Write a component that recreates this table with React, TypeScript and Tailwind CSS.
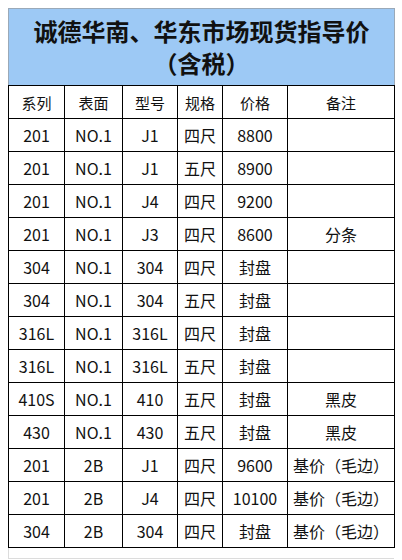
import React from "react"

const cols = [56, 58, 55, 45, 65, 107]

const heads = ["系列", "表面", "型号", "规格", "价格", "备注"]

const rows: string[][] = [
  ["201", "NO.1", "J1", "四尺", "8800", ""],
  ["201", "NO.1", "J1", "五尺", "8900", ""],
  ["201", "NO.1", "J4", "四尺", "9200", ""],
  ["201", "NO.1", "J3", "四尺", "8600", "分条"],
  ["304", "NO.1", "304", "四尺", "封盘", ""],
  ["304", "NO.1", "304", "五尺", "封盘", ""],
  ["316L", "NO.1", "316L", "四尺", "封盘", ""],
  ["316L", "NO.1", "316L", "五尺", "封盘", ""],
  ["410S", "NO.1", "410", "五尺", "封盘", "黑皮"],
  ["430", "NO.1", "430", "五尺", "封盘", "黑皮"],
  ["201", "2B", "J1", "四尺", "9600", "基价（毛边）"],
  ["201", "2B", "J4", "四尺", "10100", "基价（毛边）"],
  ["304", "2B", "304", "四尺", "封盘", "基价（毛边）"],
]

const font = { fontFamily: '"Noto Sans CJK SC", "Liberation Sans", sans-serif' }

export default function App() {
  return (
    <div className="w-[402px] h-[560px] bg-white pt-[8px] pl-[8px] overflow-hidden" style={font}>
      <table className="border-collapse table-fixed w-[386px] text-[#111]">
        <colgroup>
          {cols.map((w, i) => (
            <col key={i} style={{ width: w }} />
          ))}
        </colgroup>
        <tbody>
          <tr>
            <td
              colSpan={6}
              className="h-[77px] bg-[#9dc9f5] border border-[#9aa9b8] border-b-black text-center font-bold text-[24px] leading-[32px] text-[#111] p-0"
            >
              <div>诚德华南、华东市场现货指导价</div>
              <div>（含税）</div>
            </td>
          </tr>
          <tr>
            {heads.map((h, i) => (
              <td key={i} className="h-[33px] border border-black text-center text-[15px] p-0 leading-none">
                {h}
              </td>
            ))}
          </tr>
          {rows.map((r, ri) => (
            <tr key={ri}>
              {r.map((c, ci) => (
                <td key={ci} className="h-[33px] border border-black text-center text-[16px] p-0 leading-none whitespace-nowrap">
                  {c}
                </td>
              ))}
            </tr>
          ))}
        </tbody>
      </table>
      <div className="w-[386px] h-[11px] border-l border-b border-[#dcdcdc]" />
    </div>
  )
}
